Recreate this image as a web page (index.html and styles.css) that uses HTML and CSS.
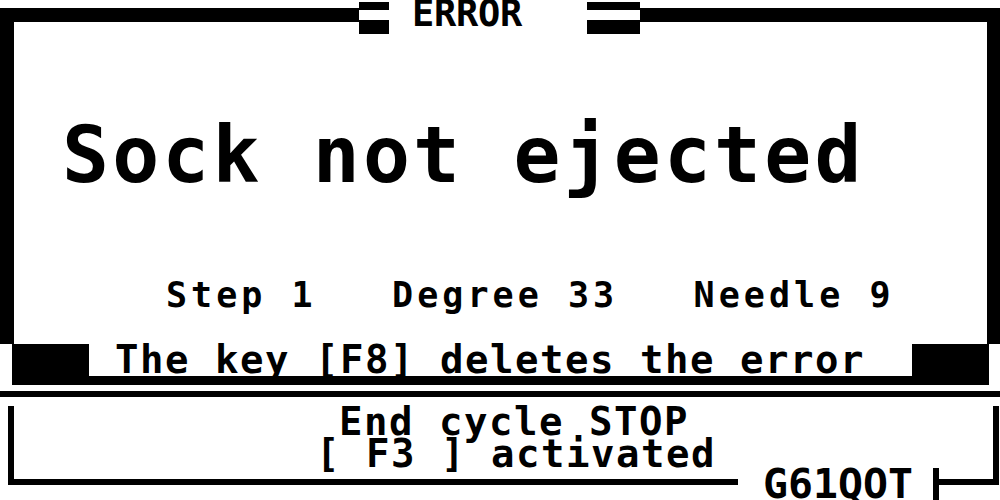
FILE: index.html
```html
<!DOCTYPE html>
<html lang="en">
<head>
<meta charset="utf-8">
<title>Error</title>
<link rel="stylesheet" href="styles.css">
</head>
<body>
<div class="screen">
  <section class="panel">
    <div class="title">
      <span class="bracket bracket-left"></span>
      <span class="title-text">ERROR</span>
      <span class="bracket bracket-right"></span>
    </div>
    <div class="headline">Sock not ejected</div>
    <div class="info">Step 1   Degree 33   Needle 9</div>
  </section>
  <div class="msg-row">
    <span class="msg-cap"></span>
    <div class="msg-text">The key [F8] deletes the error</div>
    <span class="msg-cap"></span>
  </div>
  <div class="separator"></div>
  <section class="status">
    <div class="status-line line-1">End cycle STOP</div>
    <div class="status-line line-2">[ F3 ] activated</div>
    <div class="code">G61QOT</div>
  </section>
</div>
</body>
</html>
```
FILE: styles.css
```css
html, body {
  margin: 0;
  padding: 0;
  background: #fff;
}
body {
  width: 1000px;
  height: 500px;
  overflow: hidden;
  font-family: "DejaVu Sans Mono", "Liberation Mono", monospace;
  font-weight: bold;
  color: #000;
}
.screen {
  width: 1000px;
  height: 500px;
  overflow: hidden;
  padding-top: 8px;
  box-sizing: border-box;
}
.panel {
  position: relative;
  box-sizing: border-box;
  width: 1000px;
  height: 336px;
  border-top: 14px solid #000;
  border-left: 14px solid #000;
  border-right: 13px solid #000;
}
.title {
  position: absolute;
  left: 345px;
  top: -20px;
  display: flex;
  height: 32px;
}
.bracket {
  box-sizing: border-box;
  height: 32px;
  background: #fff;
  border-top: 8px solid #000;
  border-bottom: 14px solid #000;
}
.bracket-left { width: 30px; }
.bracket-right { width: 53px; }
.title-text {
  width: 198px;
  height: 32px;
  background: #fff;
  box-sizing: border-box;
  padding-left: 23px;
  font-size: 37px;
  letter-spacing: -0.3px;
  line-height: 28px;
  margin-top: -2px;
}
.headline {
  margin-top: 103px;
  padding-left: 48px;
  font-size: 78px;
  letter-spacing: 3.2px;
  line-height: 60px;
  white-space: pre;
}
.info {
  margin-top: 97px;
  padding-left: 152px;
  font-size: 35px;
  letter-spacing: 4.05px;
  line-height: 26px;
  white-space: pre;
}
.msg-row {
  display: flex;
  margin-left: 12px;
  width: 977px;
  height: 41px;
}
.msg-cap {
  width: 77px;
  background: #000;
}
.msg-text {
  flex: 1;
  box-sizing: border-box;
  border-bottom: 9px solid #000;
  padding-left: 26px;
  font-size: 39px;
  letter-spacing: 1.52px;
  line-height: 32px;
  white-space: pre;
}
.separator {
  margin-top: 6px;
  height: 6px;
  background: #000;
}
.status {
  position: relative;
  box-sizing: border-box;
  margin: 10px 0 0 8px;
  width: 991px;
  height: 79px;
  border-left: 6px solid #000;
  border-right: 6px solid #000;
  border-bottom: 6px solid #000;
}
.status-line {
  font-size: 39px;
  letter-spacing: 1.52px;
  line-height: 32px;
  white-space: pre;
}
.line-1 {
  margin-top: -1px;
  margin-left: 325px;
}
.line-2 {
  margin-left: 302px;
}
.code {
  position: absolute;
  left: 724px;
  top: 62px;
  width: 201px;
  height: 40px;
  box-sizing: border-box;
  background: #fff;
  border-right: 6px solid #000;
  padding-left: 25px;
  font-size: 41.5px;
  line-height: 32px;
}
```
